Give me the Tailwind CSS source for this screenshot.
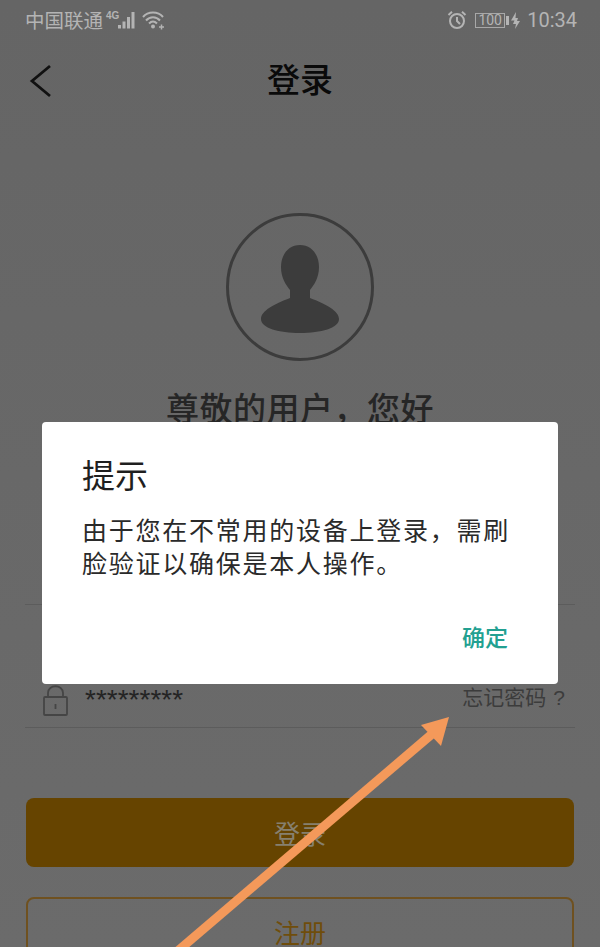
<!DOCTYPE html>
<html lang="zh-CN">
<head>
  <meta charset="UTF-8">
  <meta name="viewport" content="width=device-width, initial-scale=1.0">
  <title>登录</title>
  <script src="https://cdn.jsdelivr.net/npm/@tailwindcss/browser@4"></script>
</head>
<body class="font-['Noto_Sans_CJK_SC','Liberation_Sans',sans-serif]">
  <div class="relative w-[600px] h-[947px] overflow-hidden bg-linear-to-b from-[#656565] to-[#6b6b6b]">

    <!-- Status bar -->
    <div class="flex items-center h-[40px] pl-[25px] pr-[23px] text-[#b4b4b4]">
      <span class="text-[19.500px] leading-none">中国联通</span>
      <span class="ml-[3px] mb-[8px] text-[10px] leading-none font-bold font-['Liberation_Sans']">4G</span>
      <svg class="-ml-[1px]" width="19" height="19" viewBox="0 0 19 19" fill="#b4b4b4">
        <rect x="0" y="14" width="3" height="3.500"/><rect x="4.500" y="10.500" width="3" height="7"/><rect x="9" y="6" width="3" height="11.500"/><rect x="13.500" y="1" width="3" height="16.500"/>
      </svg>
      <svg class="ml-[5px]" width="24" height="20" viewBox="0 0 24 20" fill="none" stroke="#b4b4b4" stroke-width="2">
        <path d="M1 7 C6 1 16 1 21 7"/><path d="M4 10.500 C8 6 14 6 18 10.500"/><path d="M7 13.500 C9.500 11 12.500 11 15 13.500"/>
        <circle cx="11" cy="16.500" r="2" fill="#b4b4b4" stroke="none"/><path d="M17 17 h5 M19.500 14.500 v5" stroke-width="1.500"/>
      </svg>
      <svg class="ml-auto" width="20" height="20" viewBox="0 0 20 20" fill="none" stroke="#b4b4b4" stroke-width="2">
        <circle cx="10" cy="11" r="7"/><path d="M10 7 V11 L13 14"/><path d="M1.500 5 L5 1.800 M18.500 5 L15 1.800"/>
      </svg>
      <div class="ml-[8px] flex items-center justify-center w-[30px] h-[15px] border border-[#a8a8a8] text-[14px] leading-none font-['Roboto']">100</div>
      <div class="ml-[1px] w-[3px] h-[9px] bg-[#b4b4b4]"></div>
      <svg class="ml-[1px]" width="11" height="17" viewBox="0 0 11 17" fill="#b4b4b4"><path d="M6 0 L1 8.500 H4.500 L3 12 L6 12 L5 17 L10 9 H7 L8 6 H5.500 Z"/></svg>
      <span class="ml-[6px] text-[20px] leading-none font-['Roboto']">10:34</span>
    </div>

    <!-- Nav -->
    <div class="relative flex items-center justify-center h-[80px]">
      <svg class="absolute left-[28px] top-[24px]" width="24" height="34" viewBox="0 0 24 34" fill="none" stroke="#111" stroke-width="2.800"><path d="M22 2 L4 17 L22 32"/></svg>
      <span class="-mt-[3px] text-[33px] leading-none font-medium text-[#0a0a0a]">登录</span>
    </div>

    <!-- Avatar -->
    <div class="mt-[93px] flex justify-center">
      <div class="w-[148px] h-[148px] rounded-full border-[3px] border-[#3c3c3c] flex items-center justify-center">
        <svg width="142" height="142" viewBox="3 3 142 142" fill="#3c3c3c">
          <path d="M74 32 C86 32 93 42 93 54 C93 65 88 72 84 77 L84 85 C100 91 113 98 113 106 C113 115 95 120 74 120 C53 120 35 115 35 106 C35 98 48 91 64 85 L64 77 C60 72 55 65 55 54 C55 42 62 32 74 32 Z"/>
        </svg>
      </div>
    </div>
    <p class="mt-[24px] text-center text-[33px] leading-[44px] tracking-[0.500px] font-medium text-[#262626]">尊敬的用户，您好</p>

    <!-- Form -->
    <div class="mt-[175px] mx-[25px] h-[124px] border-y border-[#5c5c5c] flex items-end pb-[11px] pl-[18px] pr-[10px]">
      <svg width="25" height="31" viewBox="0 0 25 31" fill="none" stroke="#454545" stroke-width="1.800">
        <path d="M5 12 V8 C5 -1 20 -1 20 8 V12"/><rect x="1" y="12" width="23" height="18" rx="1"/><path d="M12.500 19 V24"/>
      </svg>
      <span class="ml-[17px] mb-[1px] text-[28px] leading-[30px] text-[#242424] font-['Liberation_Sans']">*********</span>
      <span class="ml-auto mb-[4px] text-[21px] leading-[28px] text-[#3c3c3c]">忘记密码<span class="ml-[7px] font-['Liberation_Sans']">?</span></span>
    </div>

    <!-- Buttons -->
    <div class="mt-[70px] mx-[26px] flex flex-col gap-[30px]">
      <button class="h-[69px] rounded-[8px] bg-[#664400] text-[26px] text-[#86806f]">登录</button>
      <button class="h-[69px] rounded-[8px] border-2 border-[#6f5120] text-[26px] text-[#6f4d0c]">注册</button>
    </div>

    <!-- Dialog -->
    <div class="absolute left-[42px] top-[422px] w-[516px] h-[262px] rounded-[4px] bg-white pt-[30px] px-[40px]">
      <h2 class="text-[33px] leading-[44px] text-[#1f1f1f]">提示</h2>
      <p class="mt-[17px] text-[25px] leading-[33px] tracking-[1.750px] text-[#2a2a2a]">由于您在不常用的设备上登录，需刷脸验证以确保是本人操作。</p>
      <div class="mt-[41px] text-right pr-[10px] text-[23px] leading-[32px] font-medium text-[#22a091]">确定</div>
    </div>

    <!-- Arrow annotation -->
    <svg class="absolute left-0 top-0" width="600" height="947" viewBox="0 0 600 947" fill="#f4995a">
      <path d="M173 955 L432 734" fill="none" stroke="#f4995a" stroke-width="9"/>
      <polygon points="449,717 421,725 441,746"/>
    </svg>
  </div>
</body>
</html>
